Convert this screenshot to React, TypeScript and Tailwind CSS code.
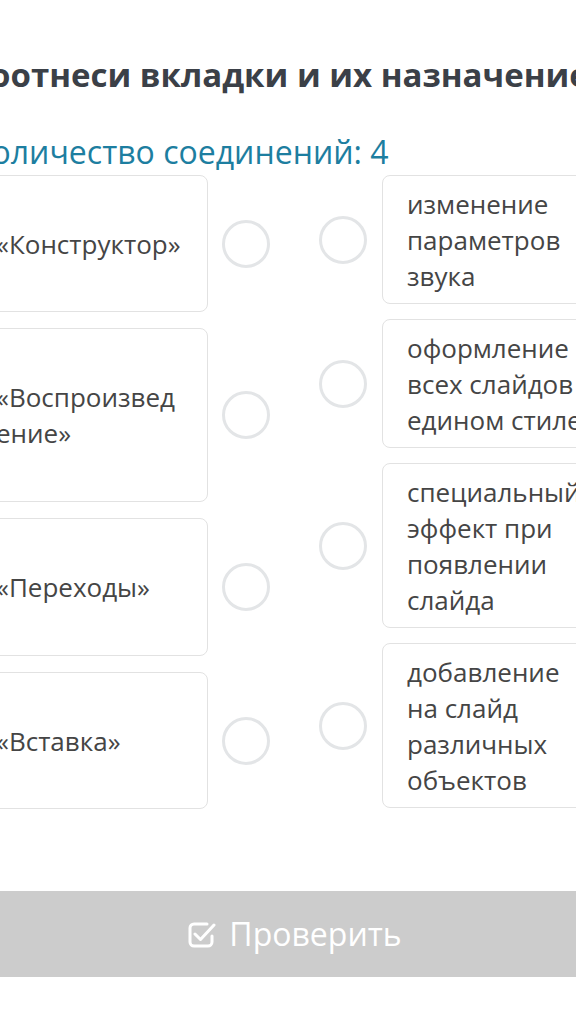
import React from 'react';

const LEFT = [
  { text: '«Конструктор»', h: 'h-[137px]' },
  { text: '«Воспроизведение»', h: 'h-[174px]' },
  { text: '«Переходы»', h: 'h-[138px]' },
  { text: '«Вставка»', h: 'h-[137px]' },
];

const RIGHT = [
  'изменение параметров звука',
  'оформление всех слайдов в едином стиле',
  'специальный эффект при появлении слайда',
  'добавление на\u00a0слайд различных объектов',
];

function Dot() {
  return <div className="w-12 h-12 shrink-0 rounded-full border-[3.5px] border-[#e3e5e7] bg-white" />;
}

export default function App() {
  return (
    <div className="w-[576px] h-[1011px] overflow-hidden bg-white" style={{ fontFamily: '"Open Sans", sans-serif' }}>
      <div className="w-[644px] -ml-[27px]">
        <h1 className="pt-[55px] -ml-[4px] text-[33px] leading-[40px] font-bold text-[#3b4047] whitespace-nowrap">
          Соотнеси вкладки и их назначение
        </h1>
        <p className="mt-[37px] -ml-[1px] text-[32px] leading-[40px] text-[#1d7ea0] whitespace-nowrap">
          Количество соединений: 4
        </p>

        <div className="mt-[3px] flex items-start gap-[49px]">
          <div className="flex flex-col gap-4">
            {LEFT.map((item) => (
              <div key={item.text} className={`flex items-center gap-[14px] ${item.h}`}>
                <div className="w-[235px] h-full flex items-center pl-[22px] pr-6 rounded-lg border-[1.5px] border-[#e2e2e2] bg-white text-[26px] leading-[36px] text-[#454545] break-all">
                  {item.text}
                </div>
                <Dot />
              </div>
            ))}
          </div>
          <div className="flex flex-col gap-[15px]">
            {RIGHT.map((text) => (
              <div key={text} className="flex items-center gap-[15px]">
                <Dot />
                <div className="w-[235px] pl-6 pr-3 py-[9.5px] rounded-lg border-[1.5px] border-[#e2e2e2] bg-white text-[26px] leading-[36px] text-[#454545]">
                  {text}
                </div>
              </div>
            ))}
          </div>
        </div>

        <button
          type="button"
          className="mt-[82px] w-full h-[86px] flex items-center justify-center gap-[13px] bg-[#cccccc] text-white text-[32px]"
        >
          <svg className="w-[28px] h-[27px]" viewBox="0 0 28 27" fill="none" stroke="currentColor" strokeWidth="3" strokeLinecap="round" strokeLinejoin="round">
            <path d="M24 15v6a4 4 0 0 1-4 4H6a4 4 0 0 1-4-4V7a4 4 0 0 1 4-4h13" />
            <path d="M7 13l5.5 5.5L26 4" />
          </svg>
          <span>Проверить</span>
        </button>
      </div>
    </div>
  );
}
